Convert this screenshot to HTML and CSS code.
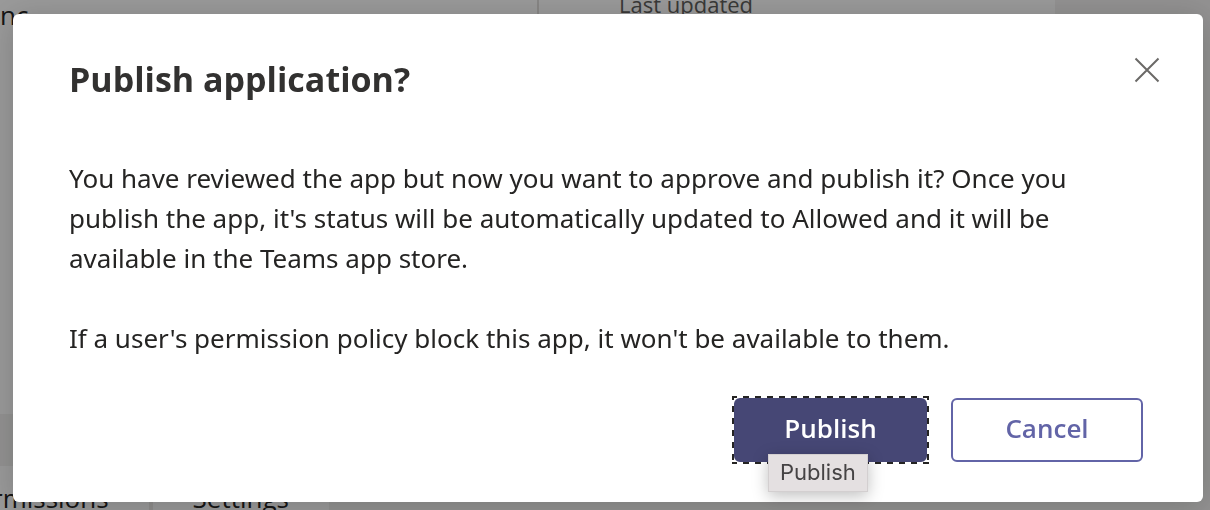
FILE: index.html
```html
<!DOCTYPE html>
<html lang="en">
<head>
<meta charset="utf-8">
<title>Publish application?</title>
<link rel="stylesheet" href="styles.css">
</head>
<body>
<main class="page">
  <section class="summary">
    <div class="summary-name">nc</div>
    <div class="summary-meta">Last updated</div>
  </section>
  <nav class="tabs">
    <a class="tab tab-first" href="#permissions">rmissions</a>
    <a class="tab" href="#settings">Settings</a>
  </nav>
</main>
<div class="overlay">
  <div class="dialog" role="dialog" aria-modal="true" aria-labelledby="dialog-title">
    <header class="dialog-header">
      <h1 class="dialog-title" id="dialog-title">Publish application?</h1>
      <button class="close" type="button" aria-label="Close">
        <svg class="close-icon" viewBox="0 0 26 26" aria-hidden="true"><path d="M1.5 1.5 24.5 24.5M24.5 1.5 1.5 24.5"/></svg>
      </button>
    </header>
    <div class="dialog-body">
      <p>You have reviewed the app but now you want to approve and publish it? Once you publish the app, it's status will be automatically updated to Allowed and it will be available in the Teams app store.</p>
      <p>If a user's permission policy block this app, it won't be available to them.</p>
    </div>
    <footer class="dialog-actions">
      <div class="publish-wrap">
        <button class="button button-primary" type="button">Publish</button>
        <span class="tooltip" role="tooltip">Publish</span>
      </div>
      <button class="button button-secondary" type="button">Cancel</button>
    </footer>
  </div>
</div>
</body>
</html>
```
FILE: styles.css
```css
* {
  box-sizing: border-box;
}

body {
  margin: 0;
  background: #f3f2f1;
  color: #252423;
  font-family: "Segoe UI", "Open Sans", "Noto Sans", sans-serif;
}

.page {
  display: flex;
  flex-direction: column;
  align-items: flex-start;
  gap: 52px;
  height: 100vh;
  overflow: hidden;
}

.summary {
  display: grid;
  grid-template-columns: 539px 1fr;
  width: 87.2%;
  height: 414px;
  flex: none;
  background: #fff;
  line-height: 30px;
}

.summary-name {
  border-right: 2px solid #e1dfdd;
  font-size: 26px;
}

.summary-meta {
  padding-left: 80px;
  margin-top: -11px;
  color: #605e5c;
  font-size: 22px;
}

.tabs {
  display: flex;
  flex: none;
  margin-left: -8px;
  background: #fff;
}

.tab {
  padding: 12px 40px;
  color: #252423;
  font-size: 26px;
  line-height: 40px;
  text-decoration: none;
}

.tab-first {
  padding-left: 0;
  border-right: 4px solid #edebe9;
}

.overlay {
  position: fixed;
  inset: 0;
  padding: 14px 7px 8px 13px;
  background: rgba(0, 0, 0, 0.4);
}

.dialog {
  padding: 40px 60px 40px 56px;
  border-radius: 6px;
  background: #fff;
  box-shadow: 0 4px 32px rgba(0, 0, 0, 0.18);
}

.dialog-header {
  display: flex;
  align-items: flex-start;
  justify-content: space-between;
}

.dialog-title {
  margin: 0;
  color: #323130;
  font-size: 34px;
  font-weight: 700;
  line-height: 50px;
}

.close {
  display: flex;
  margin: 0 -20px 0 0;
  padding: 3px;
  border: 0;
  background: none;
}

.close-icon {
  width: 26px;
  height: 26px;
  fill: none;
  stroke: #6b6967;
  stroke-width: 2;
}

.dialog-body {
  padding: 54px 0 40px;
  font-family: "Segoe UI", "Noto Sans", sans-serif;
  font-size: 26px;
  line-height: 40px;
}

.dialog-body p {
  margin: 0 0 40px;
}

.dialog-body p:last-child {
  margin: 0;
}

.dialog-actions {
  display: flex;
  justify-content: flex-end;
  gap: 22px;
}

/* Focus ring: square-cornered dashes, 6px on and 6px off */
.publish-wrap {
  position: relative;
  margin: -2px 0;
  padding: 2px;
  background:
    repeating-linear-gradient(90deg, #252423 0 6px, #fff 6px 12px) -1px 0 / 101% 2px no-repeat,
    repeating-linear-gradient(90deg, #252423 0 6px, #fff 6px 12px) -1px 100% / 101% 2px no-repeat,
    repeating-linear-gradient(#252423 0 6px, #fff 6px 12px) 0 -2px / 2px 104% no-repeat,
    repeating-linear-gradient(#252423 0 6px, #fff 6px 12px) 100% -2px / 2px 104% no-repeat;
}

.button {
  display: block;
  width: 192px;
  height: 64px;
  padding: 0 0 4px;
  border: 2px solid #6264a7;
  border-radius: 6px;
  font: 600 26px/36px "Segoe UI", "Open Sans", "Noto Sans", sans-serif;
}

.button-primary {
  width: 193px;
  border-color: #464775;
  background: #464775;
  color: #fff;
}

.button-secondary {
  background: #fff;
  color: #6264a7;
}

.tooltip {
  position: absolute;
  top: 58px;
  left: 36px;
  padding: 0 11px 2px;
  border: 1px solid #d3cfd0;
  background: #e4e0e1;
  box-shadow: 0 4px 16px rgba(0, 0, 0, 0.25);
  color: #454344;
  font-family: Inter, sans-serif;
  font-size: 22px;
  line-height: 34px;
}
```
